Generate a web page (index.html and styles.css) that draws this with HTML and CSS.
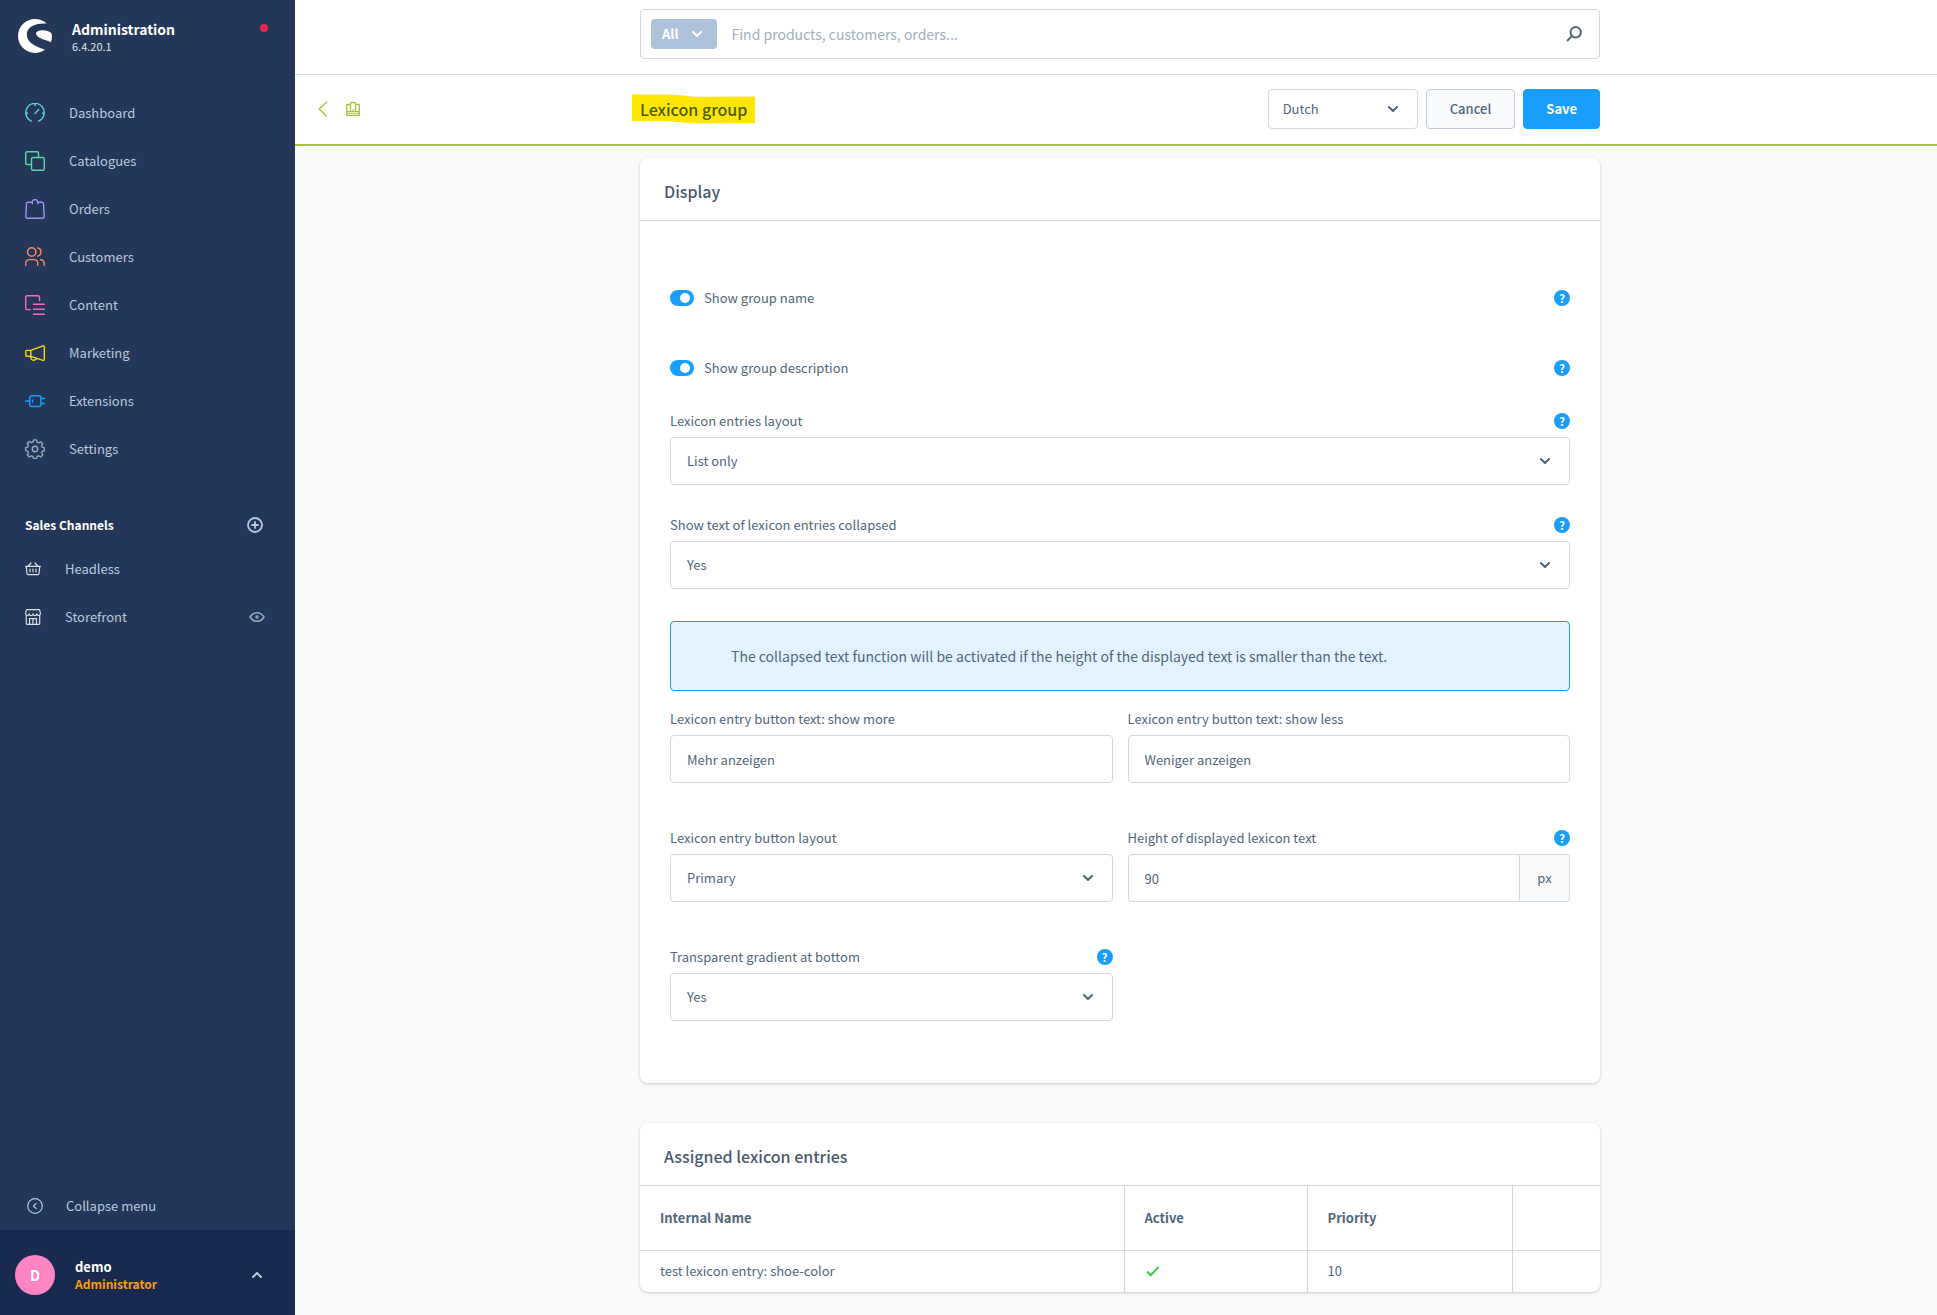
FILE: index.html
```html
<!DOCTYPE html>
<html lang="en">
<head>
<meta charset="utf-8">
<meta name="viewport" content="width=device-width, initial-scale=1">
<title>Lexicon group | Administration</title>
<link rel="stylesheet" href="styles.css">
</head>
<body>
<svg class="sprite" aria-hidden="true">
  <symbol id="chevron" viewBox="0 0 10 6"><path d="M1 1l4 4 4-4" fill="none" stroke="currentColor" stroke-width="2" stroke-linecap="round" stroke-linejoin="round"/></symbol>
</svg>
<div class="app">
  <aside class="sidebar">
    <header class="brand">
      <svg class="brand-logo" viewBox="0 0 34 34"><path d="M28.700 4.600A17 17 0 1 0 27 30.800C18 27.500 8.800 24 8.800 15.500C8.800 7 19 4 28.700 4.600z"/><path d="M18 14.600C18.200 12 21.500 11.200 24.500 11.200C29 11.200 32 12.600 33.500 14.600C34.200 17.500 34 20.500 32.900 23.200C29 21.300 25 20.500 22.500 19.200C20 18 18 16.500 18 14.600z"/></svg>
      <div class="brand-text">
        <strong>Administration</strong>
        <span>6.4.20.1</span>
      </div>
      <span class="status-dot"></span>
    </header>
    <nav class="nav" aria-label="Main menu">
      <a href="#"><svg class="i20 c-dashboard" viewBox="0 0 20 20"><path d="M6.500 18.100A9.200 9.200 0 1 1 13.500 18.100M10 10.400l3.700-4M10 1v1.500M1 10.200h1.500M17.500 10.200H19"/></svg>Dashboard</a>
      <a href="#"><svg class="i20 c-catalogues" viewBox="0 0 20 20"><path d="M6.300 13.500H2.200A1.500 1.500 0 0 1 .700 12V2.200A1.500 1.500 0 0 1 2.200.700H12A1.500 1.500 0 0 1 13.500 2.200V6.300"/><rect x="6.500" y="6.500" width="12.800" height="12.800" rx="1.500"/></svg>Catalogues</a>
      <a href="#"><svg class="i20 c-orders" viewBox="0 0 20 20"><path d="M5.500 3.300H3A1.500 1.500 0 0 0 1.500 4.800L.800 17.600A1.500 1.500 0 0 0 2.300 19.300H17.700A1.500 1.500 0 0 0 19.200 17.600L18.500 4.800A1.500 1.500 0 0 0 17 3.300H14.500M7.300 4.800V3.300A2.700 2.700 0 0 1 12.700 3.300V4.800M7.300 3.300h-1.200M12.700 3.300h1.200"/></svg>Orders</a>
      <a href="#"><svg class="i20 c-customers" viewBox="0 0 20 20"><circle cx="6.700" cy="5" r="4.200"/><path d="M.800 18.300V16A3.400 3.400 0 0 1 4.200 12.600H9.300A3.400 3.400 0 0 1 12.700 16V18.300M12.700.900A4.200 4.200 0 0 1 12.700 9.100M15.500 12.700A3.600 3.600 0 0 1 19.200 16.300V18.300"/></svg>Customers</a>
      <a href="#"><svg class="i20 c-content" viewBox="0 0 20 20"><path d="M5.300 14.600H2.200A1.500 1.500 0 0 1 .700 13.100V2.200A1.500 1.500 0 0 1 2.200.700H13A1.500 1.500 0 0 1 14.500 2.200V5.500M8.500 9.300H19.300M8.500 14.300H19.300M8.500 19.200H19.300"/></svg>Content</a>
      <a href="#"><svg class="i20 c-marketing" viewBox="0 0 20 20"><path d="M.800 8.200V12.500A.800.800 0 0 0 1.600 13.300H5.800V7.400H1.600A.800.800 0 0 0 .800 8.200zM5.800 7.400L18 2.900A1 1 0 0 1 19.300 3.800V16.500A1 1 0 0 1 18 17.400L5.800 13.300M5.800 13.500A2.900 2.900 0 0 0 11.400 15.200"/></svg>Marketing</a>
      <a href="#"><svg class="i20 c-extensions" viewBox="0 0 20 20"><path d="M.700 10H4.700M16 7.500h3.500M16 12.500h3.500M7.500 9v2"/><rect x="4.700" y="4.700" width="11.300" height="10.800" rx="2.200"/></svg>Extensions</a>
      <a href="#"><svg class="i20 c-settings" viewBox="0 0 20 20"><circle cx="10" cy="10" r="2.700"/><path d="M8.600.900h2.800l.700 2.300 1.500.6 2.100-1.100 2 2-1.100 2.100.6 1.500 2.200.6v2.800l-2.200.6-.6 1.500 1.100 2.100-2 2-2.100-1.100-1.500.6-.7 2.300H8.600l-.7-2.300-1.500-.6-2.100 1.100-2-2 1.100-2.100-.6-1.500L.700 11.500V8.700l2.100-.6.600-1.500-1.100-2.100 2-2 2.100 1.100 1.500-.6z"/></svg>Settings</a>
    </nav>
    <section class="channels">
      <div class="channels-head">
        <h2>Sales Channels</h2>
        <button type="button" aria-label="Add sales channel"><svg class="i16 thick" viewBox="0 0 16 16"><circle cx="8" cy="8" r="7"/><path d="M8 5v6M5 8h6"/></svg></button>
      </div>
      <a href="#"><svg class="i16" viewBox="0 0 16 16"><path d="M.600 5.300h14.800M1.200 5.300L2 12.500A1.300 1.300 0 0 0 3.300 13.700H12.700A1.300 1.300 0 0 0 14 12.500L14.800 5.300M3.200 5L6 2M12.800 5L10 2M5 8v2.800M8 8v2.800M11 8v2.800"/></svg>Headless</a>
      <a href="#"><svg class="i16" viewBox="0 0 16 16"><path d="M1.300 6V14.500A.900.900 0 0 0 2.200 15.400H13.800A.900.900 0 0 0 14.700 14.500V6M.600 4.500L1.200 1.500A1.100 1.100 0 0 1 2.300.600H13.700A1.100 1.100 0 0 1 14.800 1.500L15.400 4.500A1.850 1.850 0 0 1 11.700 4.800A1.850 1.850 0 0 1 8 4.800A1.850 1.850 0 0 1 4.300 4.800A1.850 1.850 0 0 1 .600 4.500zM4.500 15V9.700H11.500V15M8 9.700V15"/></svg>Storefront<svg class="eye" viewBox="0 0 16 16"><path d="M1 8C4.500 2.200 11.500 2.200 15 8C11.500 13.800 4.500 13.800 1 8z"/><circle cx="8" cy="8" r="1"/></svg></a>
    </section>
    <button type="button" class="collapse"><svg class="i16" viewBox="0 0 16 16"><circle cx="8" cy="8" r="7.300"/><path d="M9.200 5.300L6.500 8l2.700 2.700"/></svg>Collapse menu</button>
    <button type="button" class="user">
      <span class="avatar">D</span>
      <span class="user-text"><span class="user-name">demo</span><span class="user-role">Administrator</span></span>
      <svg class="chevron up"><use href="#chevron"/></svg>
    </button>
  </aside>

  <div class="page">
    <div class="topbar">
      <form class="search container" role="search">
        <button type="button" class="search-type">All <svg class="chevron"><use href="#chevron"/></svg></button>
        <input type="search" aria-label="Search" placeholder="Find products, customers, orders...">
        <button type="button" class="search-go" aria-label="Search"><svg viewBox="0 0 16 16"><circle cx="9.700" cy="6.300" r="5.200"/><path d="M6 10L1 15"/></svg></button>
      </form>
    </div>
    <header class="smartbar">
      <div class="smartbar-nav">
        <a href="#" aria-label="Back"><svg class="back" viewBox="0 0 10 16"><path d="M9 .700L1.200 8L9 15.500"/></svg></a>
        <svg class="module" viewBox="0 0 16 16"><path d="M1.700 3.500H5.500V2.300A.800.800 0 0 1 6.300 1.500H9.700A.800.800 0 0 1 10.500 2.300V3.500H14.300V14.300H1.700zM5.500 3.500V10M10.500 3.500V10"/><path class="spines" d="M2 10.500h12M2 12.200h12M7 9h2"/></svg>
      </div>
      <div class="smartbar-main container">
        <h1><svg class="marker" viewBox="0 0 124 30" preserveAspectRatio="none"><path d="M0 0.500H36C50 1 56 2.500 70 2.800L124 2.500V29L70 29.500C50 29 42 27 26 27H0z"/></svg><span>Lexicon group</span></h1>
        <div class="select language">
          <select aria-label="Language"><option>Dutch</option></select>
          <svg class="chevron"><use href="#chevron"/></svg>
        </div>
        <button type="button" class="btn">Cancel</button>
        <button type="button" class="btn primary">Save</button>
      </div>
    </header>

    <main class="content">
      <section class="card container">
        <h2 class="card-title">Display</h2>
        <form class="display-form">
          <div class="switches">
            <div class="switch-row"><input type="checkbox" class="switch" id="show-name" checked><label for="show-name">Show group name</label><button type="button" class="help">?</button></div>
            <div class="switch-row"><input type="checkbox" class="switch" id="show-desc" checked><label for="show-desc">Show group description</label><button type="button" class="help">?</button></div>
          </div>
          <div class="stack">
            <div class="field">
              <div class="field-head"><label for="layout">Lexicon entries layout</label><button type="button" class="help">?</button></div>
              <div class="select"><select id="layout"><option>List only</option></select><svg class="chevron"><use href="#chevron"/></svg></div>
            </div>
            <div class="field">
              <div class="field-head"><label for="collapsed">Show text of lexicon entries collapsed</label><button type="button" class="help">?</button></div>
              <div class="select"><select id="collapsed"><option>Yes</option></select><svg class="chevron"><use href="#chevron"/></svg></div>
            </div>
            <p class="alert">The collapsed text function will be activated if the height of the displayed text is smaller than the text.</p>
          </div>
          <div class="columns">
            <div class="field">
              <div class="field-head"><label for="more">Lexicon entry button text: show more</label></div>
              <input type="text" id="more" value="Mehr anzeigen">
            </div>
            <div class="field">
              <div class="field-head"><label for="less">Lexicon entry button text: show less</label></div>
              <input type="text" id="less" value="Weniger anzeigen">
            </div>
            <div class="field">
              <div class="field-head"><label for="button-layout">Lexicon entry button layout</label></div>
              <div class="select"><select id="button-layout"><option>Primary</option></select><svg class="chevron"><use href="#chevron"/></svg></div>
            </div>
            <div class="field">
              <div class="field-head"><label for="height">Height of displayed lexicon text</label><button type="button" class="help">?</button></div>
              <div class="suffixed"><input type="text" inputmode="numeric" id="height" value="90"><span>px</span></div>
            </div>
            <div class="field">
              <div class="field-head"><label for="gradient">Transparent gradient at bottom</label><button type="button" class="help">?</button></div>
              <div class="select"><select id="gradient"><option>Yes</option></select><svg class="chevron"><use href="#chevron"/></svg></div>
            </div>
          </div>
        </form>
      </section>

      <section class="card container entries">
        <h2 class="card-title">Assigned lexicon entries</h2>
        <table>
          <colgroup><col><col class="col-active"><col class="col-priority"><col class="col-actions"></colgroup>
          <thead><tr><th scope="col">Internal Name</th><th scope="col">Active</th><th scope="col">Priority</th><td></td></tr></thead>
          <tbody><tr><td>test lexicon entry: shoe-color</td><td><svg class="check" viewBox="0 0 16 12" role="img" aria-label="Yes"><path d="M2 6.500L5.700 10.200L13.500 2"/></svg></td><td>10</td><td></td></tr></tbody>
        </table>
      </section>
    </main>
  </div>
</div>
</body>
</html>
```
FILE: styles.css
```css
:root {
  --navy: #243758;
  --navy-dark: #182a4d;
  --blue: #189eff;
  --green: #a6c437;
  --text: #52667a;
  --heading: #4a596b;
  --line: #d1d9e0;
  --surface: #f9fafb;
  --nav-text: #b9c9dd;
}

* { box-sizing: border-box; }

body {
  margin: 0;
  background: var(--surface);
  color: var(--text);
  font: 13px/20px "Noto Sans CJK SC", "Noto Sans", sans-serif;
}

button, input, select { font: inherit; color: inherit; margin: 0; }
button { border: 0; padding: 0; background: none; cursor: pointer; }
a { color: inherit; text-decoration: none; }
h1, h2, p { margin: 0; }
svg { flex: none; fill: none; }

.sprite { position: absolute; width: 0; height: 0; }
.chevron { width: 10px; height: 6px; }
.up { transform: rotate(180deg); }

.app { display: flex; min-height: 100vh; }

/* Sidebar */
.sidebar {
  display: flex;
  flex-direction: column;
  flex: none;
  width: 295px;
  background: var(--navy);
  color: var(--nav-text);
}
.sidebar svg { stroke: currentColor; stroke-linecap: round; stroke-linejoin: round; }
.brand { display: flex; align-items: flex-start; padding: 19px 27px 0 18px; height: 89px; }
.sidebar .brand-logo { width: 34px; height: 34px; margin-right: 20px; fill: #fff; stroke: none; }
.brand-text { display: flex; flex-direction: column; flex: 1; color: #fff; }
.brand-text strong { font-size: 14px; line-height: 20px; }
.brand-text span { font-size: 11px; line-height: 14px; color: #dfe6ee; }
.status-dot { width: 8px; height: 8px; margin-top: 5px; border-radius: 50%; background: #de294c; }

.nav a { display: flex; align-items: center; gap: 24px; height: 48px; padding-left: 25px; }
.i20 { width: 20px; height: 20px; stroke-width: 1.4; }
.i16 { width: 16px; height: 16px; stroke-width: 1.2; }
.thick { stroke-width: 1.8; }
.c-dashboard { color: #5fcbe5; }
.c-catalogues { color: #57d9a3; }
.c-orders { color: #a092f0; }
.c-customers { color: #f88962; }
.c-content { color: #ff68b4; }
.c-marketing { color: #ffd700; }
.c-extensions { color: #189eff; }
.c-settings { color: #98a8ba; }

.channels { margin-top: 32px; }
.channels-head { display: flex; align-items: center; justify-content: space-between; height: 40px; padding: 0 32px 0 25px; }
.channels-head button { display: flex; }
.channels h2 { font-size: 12px; line-height: 20px; color: #fff; }
.channels a { display: flex; align-items: center; gap: 24px; height: 48px; padding: 0 30px 0 25px; }
.channels .i16 { color: #d8e0ea; }
.channels .thick { color: var(--nav-text); }
.eye { width: 16px; height: 16px; margin-left: auto; stroke-width: 1.5; color: #98a8ba; }

.collapse { display: flex; align-items: center; gap: 23px; height: 48px; margin-top: auto; padding-left: 27px; }
.user { display: flex; align-items: center; height: 85px; padding: 4px 33px 0 15px; background: var(--navy-dark); text-align: left; }
.avatar { display: grid; place-items: center; width: 40px; height: 40px; margin-right: 20px; border-radius: 50%; background: #ff85c2; color: #fff; font-size: 14px; font-weight: 700; }
.user-text { display: flex; flex: 1; flex-direction: column; font-weight: 700; line-height: 17px; }
.user-name { color: #fff; }
.user-role { color: #ff9a0d; font-size: 12px; }

/* Page frame */
.page { flex: 1; min-width: 0; }
.container { width: 100%; max-width: 960px; }
.topbar { display: flex; justify-content: center; padding: 9px 0 15px 8px; border-bottom: 1px solid var(--line); background: #fff; }
.search { display: flex; align-items: center; height: 50px; padding: 0 17px 0 10px; border: 1px solid var(--line); border-radius: 4px; }
.search-type { display: flex; align-items: center; gap: 13px; height: 30px; padding: 0 15px 0 11px; border-radius: 4px; background: #aec3db; color: #fff; font-weight: 700; }
.search input { flex: 1; min-width: 0; padding: 0 15px; border: 0; outline: 0; background: none; font-size: 14px; }
.search input::placeholder { color: #a3b0bd; opacity: 1; }
.search-go { display: flex; }
.search-go svg { width: 16px; height: 16px; stroke: var(--text); stroke-width: 2; }

.smartbar { display: grid; grid-template-columns: 1fr minmax(0, 960px) 1fr; align-items: center; padding: 14px 0 15px 8px; border-bottom: 2px solid var(--green); background: #fff; }
.smartbar-nav { display: flex; align-items: center; gap: 17px; padding-left: 15px; color: var(--green); }
.smartbar-nav a { display: flex; }
.back { width: 10px; height: 16px; stroke: currentColor; stroke-width: 1.3; }
.module { width: 16px; height: 16px; stroke: currentColor; stroke-width: 1.3; stroke-linejoin: round; }
.spines { stroke-width: 1; }
.smartbar-main { display: flex; align-items: center; gap: 8px; }
.smartbar h1 { position: relative; margin-right: auto; color: #4a5b00; font-size: 16px; line-height: 24px; font-weight: 500; }
.smartbar h1 span { position: relative; }
.marker { position: absolute; top: -3px; left: -8px; width: calc(100% + 16px); height: 30px; fill: #ffe600; }
.btn { height: 40px; padding: 0 23px; border: 1px solid #c3ccd6; border-radius: 4px; background: var(--surface); font-weight: 500; }
.btn.primary { padding: 0 22px; border-color: var(--blue); background: var(--blue); color: #fff; font-weight: 700; }

.content { display: flex; flex-direction: column; align-items: center; gap: 40px; padding: 12px 0 23px 8px; }

/* Cards */
.card { border-radius: 8px; background: #fff; box-shadow: 0 1px 3px rgba(0, 0, 0, .2); overflow: hidden; }
.card-title { padding: 21px 24px 17px; border-bottom: 1px solid var(--line); color: var(--heading); font-size: 16px; line-height: 24px; font-weight: 500; }
.display-form { padding: 69px 30px 62px; }

/* Fields */
.switches { display: grid; gap: 54px; margin-bottom: 37px; }
.stack { display: grid; gap: 32px; margin-bottom: 20px; }
.columns { display: grid; grid-template-columns: 1fr 1fr; gap: 47px 15px; }
.switch-row, .field-head { display: flex; align-items: center; height: 16px; }
.switch { appearance: none; display: flex; align-items: center; justify-content: flex-end; width: 24px; height: 16px; margin-right: 10px; padding: 0 4px; border-radius: 8px; background: var(--blue); }
.switch::before { content: ""; width: 10px; height: 10px; border-radius: 50%; background: #fff; }
.help { width: 16px; height: 16px; margin-left: auto; border-radius: 50%; background: var(--blue); color: #fff; font-size: 11px; line-height: 16px; font-weight: 700; text-align: center; }
.field { min-width: 0; }
.field-head { margin-bottom: 8px; }
.field input, .select select { width: 100%; height: 48px; padding: 0 16px; border: 1px solid var(--line); border-radius: 4px; background: #fff; }
.select { display: grid; align-items: center; }
.select > * { grid-area: 1 / 1; }
.select select { appearance: none; }
.select .chevron { justify-self: end; margin-right: 20px; pointer-events: none; }
.language { width: 150px; }
.language select { height: 40px; padding: 0 14px; }
.suffixed { display: flex; }
.suffixed input { border-radius: 4px 0 0 4px; }
.suffixed span { display: grid; place-items: center; flex: none; width: 50px; border: 1px solid var(--line); border-left: 0; border-radius: 0 4px 4px 0; background: var(--surface); }
.alert { padding: 22px 60px; border: 1px solid var(--blue); border-radius: 4px; background: #e2f3ff; font-size: 14px; line-height: 24px; }

/* Entries table */
table { width: 100%; border-collapse: collapse; table-layout: fixed; }
.col-active { width: 183px; }
.col-priority { width: 205px; }
.col-actions { width: 88px; }
th, td { padding: 0 20px; text-align: left; }
th + *, td + td { border-left: 1px solid var(--line); }
thead tr { height: 64px; border-bottom: 1px solid var(--line); }
tbody tr { height: 42px; }
th { font-weight: 700; }
.check { display: block; width: 16px; height: 12px; stroke: #37d046; stroke-width: 2; }
```
